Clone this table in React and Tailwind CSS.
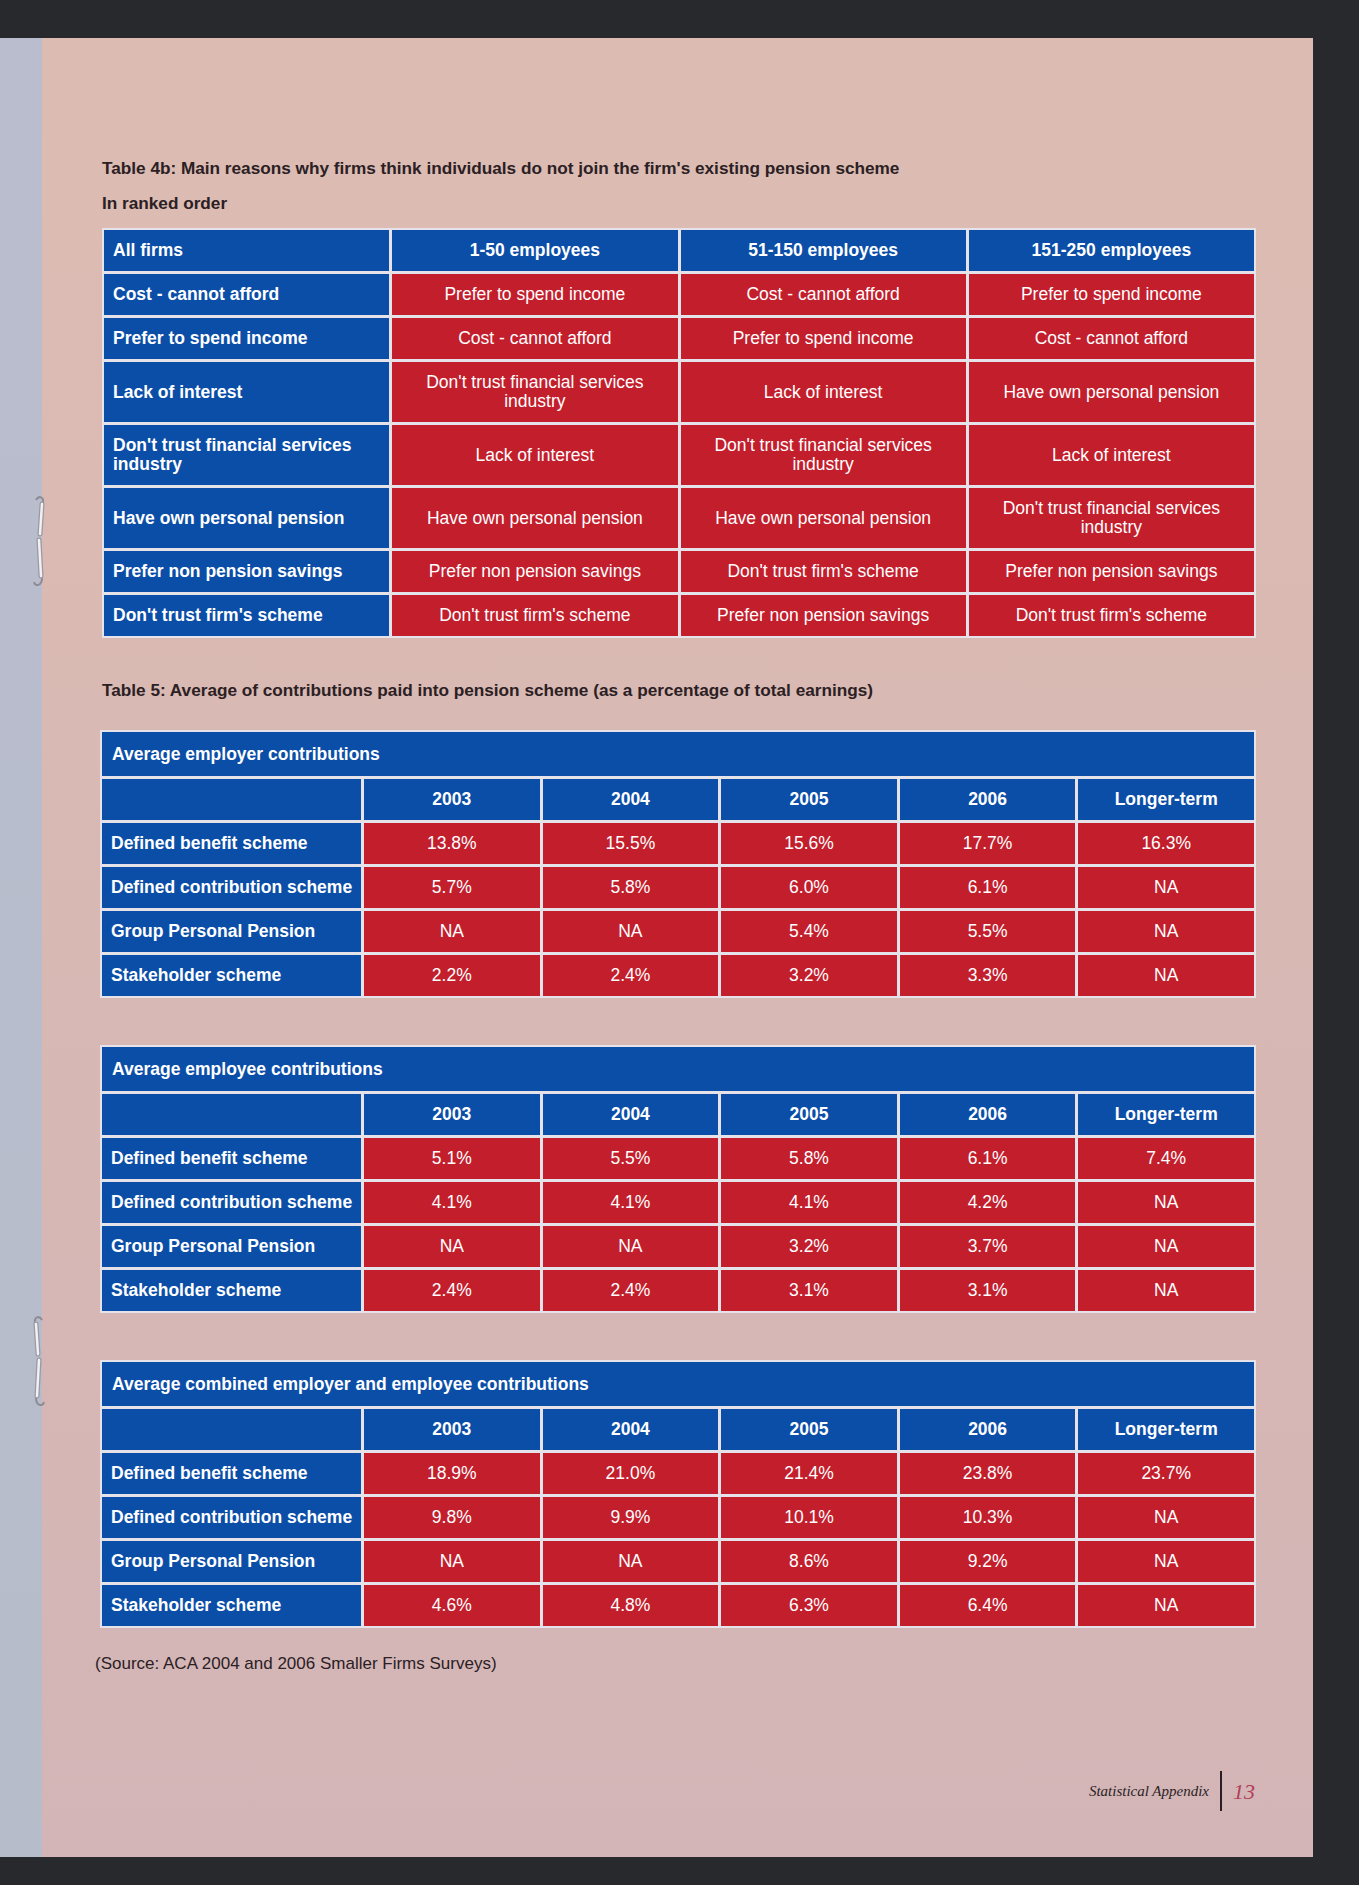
import React from 'react'

const reasons = [
  { tall: false, cells: ['Cost - cannot afford', 'Prefer to spend income', 'Cost - cannot afford', 'Prefer to spend income'] },
  { tall: false, cells: ['Prefer to spend income', 'Cost - cannot afford', 'Prefer to spend income', 'Cost - cannot afford'] },
  { tall: true, cells: ['Lack of interest', "Don't trust financial services industry", 'Lack of interest', 'Have own personal pension'] },
  { tall: true, cells: ["Don't trust financial services industry", 'Lack of interest', "Don't trust financial services industry", 'Lack of interest'] },
  { tall: true, cells: ['Have own personal pension', 'Have own personal pension', 'Have own personal pension', "Don't trust financial services industry"] },
  { tall: false, cells: ['Prefer non pension savings', 'Prefer non pension savings', "Don't trust firm's scheme", 'Prefer non pension savings'] },
  { tall: false, cells: ["Don't trust firm's scheme", "Don't trust firm's scheme", 'Prefer non pension savings', "Don't trust firm's scheme"] },
]

const years = ['2003', '2004', '2005', '2006', 'Longer-term']

const contributions = [
  {
    title: 'Average employer contributions',
    rows: [
      ['Defined benefit scheme', '13.8%', '15.5%', '15.6%', '17.7%', '16.3%'],
      ['Defined contribution scheme', '5.7%', '5.8%', '6.0%', '6.1%', 'NA'],
      ['Group Personal Pension', 'NA', 'NA', '5.4%', '5.5%', 'NA'],
      ['Stakeholder scheme', '2.2%', '2.4%', '3.2%', '3.3%', 'NA'],
    ],
  },
  {
    title: 'Average employee contributions',
    rows: [
      ['Defined benefit scheme', '5.1%', '5.5%', '5.8%', '6.1%', '7.4%'],
      ['Defined contribution scheme', '4.1%', '4.1%', '4.1%', '4.2%', 'NA'],
      ['Group Personal Pension', 'NA', 'NA', '3.2%', '3.7%', 'NA'],
      ['Stakeholder scheme', '2.4%', '2.4%', '3.1%', '3.1%', 'NA'],
    ],
  },
  {
    title: 'Average combined employer and employee contributions',
    rows: [
      ['Defined benefit scheme', '18.9%', '21.0%', '21.4%', '23.8%', '23.7%'],
      ['Defined contribution scheme', '9.8%', '9.9%', '10.1%', '10.3%', 'NA'],
      ['Group Personal Pension', 'NA', 'NA', '8.6%', '9.2%', 'NA'],
      ['Stakeholder scheme', '4.6%', '4.8%', '6.3%', '6.4%', 'NA'],
    ],
  },
]

// binder wire seen from the side
function Clip({ flip }) {
  return (
    <svg width="20" height="96" viewBox="0 0 20 96" className={flip ? '-scale-x-100' : ''}>
      <path d="M6 6 C9 1, 14 3, 13 9" fill="none" stroke="#8d8c96" strokeWidth="2" />
      <path d="M12 10 L10 40" stroke="#9b99a3" strokeWidth="5" strokeLinecap="round" />
      <path d="M12 10 L10 40" stroke="#f1f0f3" strokeWidth="2.5" strokeLinecap="round" />
      <path d="M9 46 L11 82" stroke="#9b99a3" strokeWidth="5" strokeLinecap="round" />
      <path d="M9 46 L11 82" stroke="#f1f0f3" strokeWidth="2.5" strokeLinecap="round" />
      <path d="M12 84 C12 92, 5 93, 4 88" fill="none" stroke="#8d8c96" strokeWidth="2" />
    </svg>
  )
}

function ReasonsTable() {
  return (
    <div className="w-[1154px] bg-[#e6e2ea] p-[2px] grid grid-cols-4 gap-[3px] text-[17.5px] text-white">
      <div className="bg-[#0b4ea8] h-[41px] flex items-center pl-[9px] font-bold">All firms</div>
      {['1-50 employees', '51-150 employees', '151-250 employees'].map((h) => (
        <div key={h} className="bg-[#0b4ea8] h-[41px] flex items-center justify-center font-bold">{h}</div>
      ))}
      {reasons.map((r, i) => (
        <React.Fragment key={i}>
          <div className={`bg-[#0b4ea8] ${r.tall ? 'h-[60px]' : 'h-[41px]'} flex items-center pl-[9px] pr-[20px] font-bold leading-[19px]`}>
            {r.cells[0]}
          </div>
          {r.cells.slice(1).map((c, j) => (
            <div key={j} className={`bg-[#c31e2c] ${r.tall ? 'h-[60px]' : 'h-[41px]'} flex items-center justify-center text-center px-[30px] leading-[19px]`}>
              {c}
            </div>
          ))}
        </React.Fragment>
      ))}
    </div>
  )
}

function ContribTable({ title, rows }) {
  return (
    <div className="w-[1156px] bg-[#e6e2ea] p-[2px] grid grid-cols-[259px_repeat(5,minmax(0,1fr))] gap-[3px] text-[17.5px] text-white">
      <div className="col-span-6 bg-[#0b4ea8] h-[44px] flex items-center pl-[10px] font-bold">{title}</div>
      <div className="bg-[#0b4ea8] h-[41px]" />
      {years.map((y) => (
        <div key={y} className="bg-[#0b4ea8] h-[41px] flex items-center justify-center font-bold">{y}</div>
      ))}
      {rows.map((r) => (
        <React.Fragment key={r[0]}>
          <div className="bg-[#0b4ea8] h-[41px] flex items-center pl-[9px] font-bold">{r[0]}</div>
          {r.slice(1).map((v, j) => (
            <div key={j} className="bg-[#c31e2c] h-[41px] flex items-center justify-center">{v}</div>
          ))}
        </React.Fragment>
      ))}
    </div>
  )
}

export default function App() {
  return (
    <div className="relative min-h-[1885px] w-[1359px] bg-[#28292d] pt-[38px] font-['Liberation_Sans',Arial,sans-serif]">
      <div className="flex">
        <div className="w-[42px] h-[1819px] bg-linear-to-b from-[#b9bdcd] to-[#b7bccb]" />
        <div className="w-[1271px] h-[1819px] bg-linear-to-b from-[#dcbcb2] via-[#d8b8b3] to-[#d3b5b7] flex flex-col pl-[60px] text-[#2b2024]">
          <h1 className="mt-[120px] text-[17.2px] font-bold leading-[20px]">
            Table 4b: Main reasons why firms think individuals do not join the firm's existing pension scheme
          </h1>
          <p className="mt-[15px] text-[17.2px] font-bold leading-[20px]">In ranked order</p>
          <div className="mt-[15px]">
            <ReasonsTable />
          </div>

          <h2 className="mt-[42px] text-[17.2px] font-bold leading-[20px]">
            Table 5: Average of contributions paid into pension scheme (as a percentage of total earnings)
          </h2>
          <div className="mt-[30px] -ml-[2px] flex flex-col gap-[47px]">
            {contributions.map((t) => (
              <ContribTable key={t.title} title={t.title} rows={t.rows} />
            ))}
          </div>

          <p className="mt-[25px] -ml-[7px] text-[17px] leading-[22px]">(Source: ACA 2004 and 2006 Smaller Firms Surveys)</p>

          <div className="mt-auto mb-[46px] pr-[58px] flex items-center justify-end">
            <span className="font-['Liberation_Serif',serif] italic text-[15px] text-[#2b1f25]">Statistical Appendix</span>
            <span className="mx-[11px] w-[2px] h-[40px] bg-[#2b1f25]" />
            <span className="font-['Liberation_Serif',serif] italic text-[22px] text-[#b23d58]">13</span>
          </div>
        </div>
      </div>

      <div className="absolute left-[30px] top-[494px]">
        <Clip />
      </div>
      <div className="absolute left-[28px] top-[1314px]">
        <Clip flip />
      </div>
    </div>
  )
}
